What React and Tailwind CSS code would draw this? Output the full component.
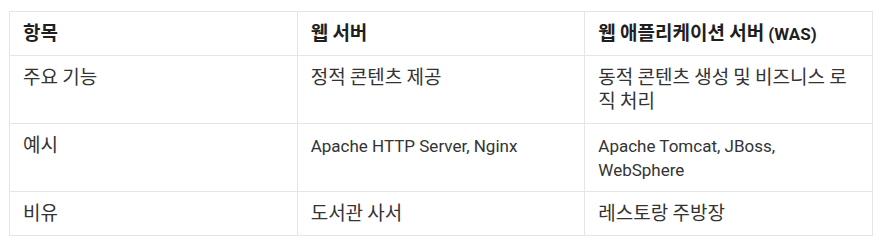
function T({ text }) {
  const parts = text.split(/([\uAC00-\uD7A3]+)/);
  return (
    <>
      {parts.map((p, i) =>
        /[\uAC00-\uD7A3]/.test(p) ? (
          <span key={i} className="font-['Noto_Sans_CJK_KR',sans-serif] text-[19px] leading-[14px]">
            {p}
          </span>
        ) : (
          <span key={i}>{p}</span>
        )
      )}
    </>
  );
}

export default function App() {
  const rows = [
    ["주요 기능", "정적 콘텐츠 제공", "동적 콘텐츠 생성 및 비즈니스 로직 처리"],
    ["예시", "Apache HTTP Server, Nginx", "Apache Tomcat, JBoss, WebSphere"],
    ["비유", "도서관 사서", "레스토랑 주방장"],
  ];
  return (
    <div className="bg-white w-[883px] h-[249px] pt-[11px] pl-[9px] font-['Roboto','Noto_Sans_CJK_KR',sans-serif]">
      <table className="border-collapse w-[864px] table-fixed text-[17px] leading-6">
        <thead>
          <tr>
            {["항목", "웹 서버", "웹 애플리케이션 서버 (WAS)"].map((h) => (
              <th key={h} className="border border-[#e5e5e5] px-[13px] py-[9.5px] text-left font-bold text-[#1f1f1f] align-top">
                <T text={h} />
              </th>
            ))}
          </tr>
        </thead>
        <tbody>
          {rows.map((r, i) => (
            <tr key={i}>
              {r.map((c, j) => (
                <td key={j} className="border border-[#e5e5e5] px-[13px] py-[9.5px] text-[#333333] align-top">
                  <T text={c} />
                </td>
              ))}
            </tr>
          ))}
        </tbody>
      </table>
    </div>
  );
}
